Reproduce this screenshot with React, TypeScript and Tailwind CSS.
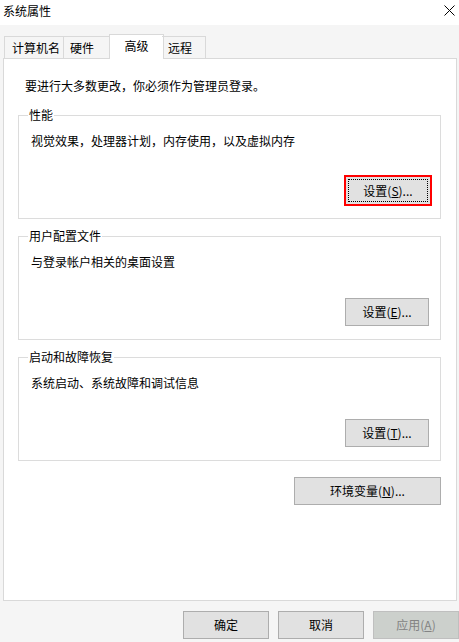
const FONT = "font-['Noto_Sans_CJK_SC','Noto_Sans',sans-serif]";

const GROUPS = [
  { title: "性能", text: "视觉效果，处理器计划，内存使用，以及虚拟内存", key: "S", focused: true },
  { title: "用户配置文件", text: "与登录帐户相关的桌面设置", key: "E", focused: false },
  { title: "启动和故障恢复", text: "系统启动、系统故障和调试信息", key: "T", focused: false },
];

const TABS = ["计算机名", "硬件", "高级", "远程"];

function SettingsButton({ k, focused }: { k: string; focused: boolean }) {
  if (focused) {
    return (
      <div className="mt-auto mb-[12px] mr-[8px] self-end w-[88px] h-[31px] border-2 border-[#ff0000] bg-[#e1e1e1] p-[2px]">
        <div className="h-full border border-dotted border-black flex items-center justify-center text-[12px] leading-none">
          设置(<span className="underline">{k}</span>)...
        </div>
      </div>
    );
  }
  return (
    <button className="mt-auto mb-[13px] mr-[11px] self-end w-[84px] h-[28px] border border-[#adadad] bg-[#e1e1e1] flex items-center justify-center text-[12px] leading-none">
      设置(<span className="underline">{k}</span>)...
    </button>
  );
}

export default function App() {
  return (
    <div className={`w-[459px] h-[642px] bg-[#f5f5f5] text-black ${FONT} flex flex-col overflow-hidden`}>

      {/* title bar */}
      <div className="h-[25px] bg-white flex items-center justify-between pl-[3px] pr-[4px] text-[12px]">
        <span className="-mt-[4px]">系统属性</span>
        <svg width="11" height="11" viewBox="0 0 11 11" className="-mt-[5px]">
          <path d="M0.5 0.5L10.5 10.5M10.5 0.5L0.5 10.5" stroke="#000" strokeWidth="1" />
        </svg>
      </div>

      {/* tabs */}
      <div className="flex items-end h-[33px] pl-[4px] relative z-10">
        {TABS.map((t, i) =>
          i === 2 ? (
            <div
              key={t}
              className="-mx-[2px] h-[25px] -mb-[1px] bg-white border border-b-0 border-[#d9d9d9] w-[55px] flex items-start justify-center pt-[3px] text-[12px] leading-[16px]"
            >
              {t}
            </div>
          ) : (
            <div
              key={t}
              className={`h-[22px] border border-b-0 border-[#d9d9d9] flex items-start pt-[3px] text-[12px] leading-[16px] ${
                i === 0 ? "w-[60px] pl-[7px]" : i === 1 ? "w-[47px] border-l-0 pl-[6px]" : "w-[44px] border-l-0 pl-[6px]"
              }`}
            >
              {t}
            </div>
          )
        )}
      </div>

      {/* panel */}
      <div className="ml-[3px] w-[454px] h-[543px] bg-white border border-[#d9d9d9] flex flex-col pl-[14px] pr-[15px] text-[12px] leading-[16px]">
        <div className="pt-[19px] pl-[7px]">要进行大多数更改，你必须作为管理员登录。</div>

        {GROUPS.map((g, i) => (
          <div
            key={g.title}
            className={`h-[104px] border border-[#dcdcdc] flex flex-col ${i === 0 ? "mt-[21px]" : "mt-[17px]"}`}
          >
            <span className="-mt-[9px] ml-[9px] px-[1px] bg-white w-fit">{g.title}</span>
            <div className="mt-[10px] pl-[12px]">{g.text}</div>
            <SettingsButton k={g.key} focused={g.focused} />
          </div>
        ))}

        <button className="mt-[16px] self-end w-[147px] h-[28px] border border-[#adadad] bg-[#e1e1e1] flex items-center justify-center text-[12px] leading-none">
          环境变量(<span className="underline">N</span>)...
        </button>
      </div>

      {/* dialog buttons */}
      <div className="mt-[10px] flex justify-end gap-[9px] text-[12px] leading-none">
        <button className="w-[86px] h-[28px] border border-[#adadad] bg-[#e1e1e1] flex items-center justify-center">确定</button>
        <button className="w-[86px] h-[28px] border border-[#adadad] bg-[#e1e1e1] flex items-center justify-center">取消</button>
        <button className="w-[86px] h-[28px] border border-[#bfbfbf] bg-[#ccd0cc] text-[#838383] flex items-center justify-center">
          应用(<span className="underline">A</span>)
        </button>
      </div>
    </div>
  );
}
